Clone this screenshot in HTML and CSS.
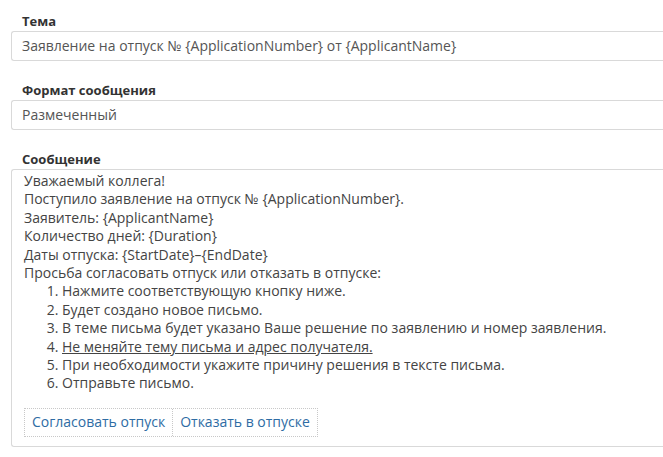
FILE: index.html
```html
<!DOCTYPE html>
<html lang="ru">
<head>
<meta charset="utf-8">
<title>Шаблон письма</title>
<link rel="stylesheet" href="styles.css">
</head>
<body>
<div class="form">
  <div class="group">
    <label class="label">Тема</label>
    <div class="input">Заявление на отпуск № {ApplicationNumber} от {ApplicantName}</div>
  </div>
  <div class="group">
    <label class="label">Формат сообщения</label>
    <div class="input">Размеченный</div>
  </div>
  <div class="group">
    <label class="label">Сообщение</label>
    <div class="message">
      <div>Уважаемый коллега!</div>
      <div>Поступило заявление на отпуск № {ApplicationNumber}.</div>
      <div>Заявитель: {ApplicantName}</div>
      <div>Количество дней: {Duration}</div>
      <div>Даты отпуска: {StartDate}–{EndDate}</div>
      <div>Просьба согласовать отпуск или отказать в отпуске:</div>
      <ol class="steps">
        <li>Нажмите соответствующую кнопку ниже.</li>
        <li>Будет создано новое письмо.</li>
        <li>В теме письма будет указано Ваше решение по заявлению и номер заявления.</li>
        <li><span class="under">Не меняйте тему письма и адрес получателя.</span></li>
        <li>При необходимости укажите причину решения в тексте письма.</li>
        <li>Отправьте письмо.</li>
      </ol>
      <div class="actions">
        <a class="action">Согласовать отпуск</a><a class="action">Отказать в отпуске</a>
      </div>
    </div>
  </div>
</div>
</body>
</html>
```

FILE: styles.css
```css
html, body {
  margin: 0;
  padding: 0;
  background: #fff;
  overflow: hidden;
}
body {
  font-family: "Open Sans", "DejaVu Sans", sans-serif;
  font-size: 14px;
  color: #333;
}
.form {
  padding: 13px 0 0 11px;
}
.group {
  margin-bottom: 21px;
}
.label {
  display: block;
  font-size: 13px;
  font-weight: 700;
  line-height: 17px;
  color: #333;
  padding-left: 11px;
  margin-bottom: 1px;
}
.input {
  box-sizing: border-box;
  height: 30px;
  border: 1px solid #d9d9d9;
  border-right: none;
  border-radius: 3px 0 0 3px;
  padding: 5px 10px;
  line-height: 18px;
  color: #555;
  white-space: nowrap;
  overflow: hidden;
}
.message {
  box-sizing: border-box;
  height: 278px;
  border: 1px solid #d9d9d9;
  border-right: none;
  border-radius: 3px 0 0 3px;
  padding: 2px 12px 0 12px;
  line-height: 18.4px;
  color: #444;
}
.steps {
  margin: 0;
  padding-left: 38px;
}
.under {
  text-decoration: underline;
}
.actions {
  display: inline-flex;
  margin-top: 15px;
  border: 1px dotted #c8c8c8;
  height: 29px;
  box-sizing: border-box;
}
.action {
  display: flex;
  align-items: center;
  padding: 0 7px;
  color: #2e6ca4;
  cursor: pointer;
}
.action + .action {
  border-left: 1px dotted #c8c8c8;
}
```
